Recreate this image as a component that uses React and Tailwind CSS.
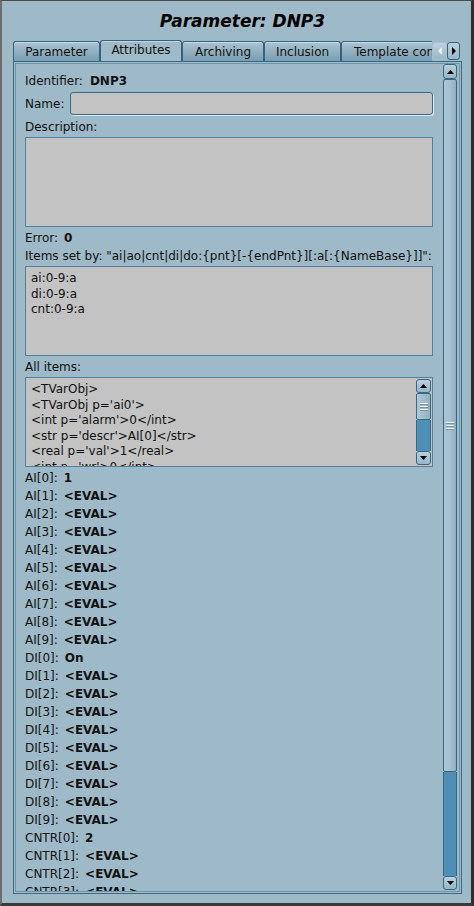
import React from 'react';

const Tri = ({ dir = 'up', color = '#000', w = 7, h = 4 }) => (
  <svg width={w} height={h} viewBox={`0 0 ${w} ${h}`} className="block">
    {dir === 'up' && <polygon points={`${w / 2},0 ${w},${h} 0,${h}`} fill={color} />}
    {dir === 'down' && <polygon points={`0,0 ${w},0 ${w / 2},${h}`} fill={color} />}
    {dir === 'left' && <polygon points={`0,${h / 2} ${w},0 ${w},${h}`} fill={color} />}
    {dir === 'right' && <polygon points={`0,0 ${w},${h / 2} 0,${h}`} fill={color} />}
  </svg>
);

const Grip = () => (
  <div className="flex flex-col gap-[2px] items-center">
    <div className="w-[8px] h-[1px] bg-white shadow-[0_1px_0_#6f93a7]" />
    <div className="w-[8px] h-[1px] bg-white shadow-[0_1px_0_#6f93a7]" />
    <div className="w-[8px] h-[1px] bg-white shadow-[0_1px_0_#6f93a7]" />
  </div>
);

const Tab = ({ w, selected, children }) => (
  <div
    className={
      selected
        ? `${w} h-[22px] -mb-[1px] relative z-10 flex items-start justify-center pt-[2px] border border-b-0 border-[#35627d] rounded-t-[3px] bg-[#9fbac8] shadow-[inset_0_1px_0_#c4d7e1] shrink-0`
        : `${w} h-[20px] flex items-center justify-center pt-[1px] border border-b-0 border-[#35627d] rounded-t-[3px] bg-linear-to-b from-[#aac4d2] to-[#7a9db1] shadow-[inset_0_1px_0_#c9dbe4] shrink-0`
    }
  >
    <span className="whitespace-nowrap leading-[14px]">{children}</span>
  </div>
);

const TextBox = ({ lines = [], children }) => (
  <div className="h-[90px] border border-[#56809a] bg-[#c3c3c3] relative overflow-hidden">
    <div className="pl-[5px] pt-[4px] leading-[15.5px] whitespace-nowrap">
      {lines.map((l, i) => (
        <div key={i}>{l}</div>
      ))}
    </div>
    {children}
  </div>
);

const Field = ({ label, value }) => (
  <div className="h-[18px] flex items-center gap-[6px] whitespace-nowrap leading-[14px]">
    <span>{label}</span>
    <span className="font-bold">{value}</span>
  </div>
);

export default function App() {
  const values = [];
  for (let i = 0; i < 10; i++) values.push(['AI[' + i + ']:', i === 0 ? '1' : '<EVAL>']);
  for (let i = 0; i < 10; i++) values.push(['DI[' + i + ']:', i === 0 ? 'On' : '<EVAL>']);
  for (let i = 0; i < 10; i++) values.push(['CNTR[' + i + ']:', i === 0 ? '2' : '<EVAL>']);

  const allItems = [
    '<TVarObj>',
    "<TVarObj p='ai0'>",
    "<int p='alarm'>0</int>",
    "<str p='descr'>AI[0]</str>",
    "<real p='val'>1</real>",
    "<int p='wr'>0</int>",
  ];

  return (
    <div className="w-[474px] h-[906px] bg-[#9eb9c7] border-l-2 border-l-[#6d6d6d] border-t border-t-[#4a4a4a] border-r-[3px] border-r-[#352d2d] border-b-[3px] border-b-[#3a3a3a] flex flex-col overflow-hidden font-['DejaVu_Sans',sans-serif] text-[12px] text-[#111]">
      {/* title */}
      <div className="h-[39px] shrink-0 pt-[9px] pl-[12px] text-center text-[17px] leading-[22px] font-bold italic text-black">
        Parameter: DNP3
      </div>

      {/* tab bar */}
      <div className="flex h-[21px] shrink-0 ml-[11px] w-[449px] relative z-10">
        <div className="flex items-end w-[419px] overflow-hidden">
          <Tab w="w-[87px]">Parameter</Tab>
          <Tab w="w-[82px]" selected>Attributes</Tab>
          <Tab w="w-[82px]">Archiving</Tab>
          <Tab w="w-[77px]">Inclusion</Tab>
          <div className="w-[160px] h-[20px] flex items-center pt-[1px] pl-[12px] border border-b-0 border-[#35627d] rounded-t-[3px] bg-linear-to-b from-[#aac4d2] to-[#7a9db1] shadow-[inset_0_1px_0_#c9dbe4] shrink-0">
            <span className="whitespace-nowrap leading-[14px]">Template configuration</span>
          </div>
        </div>
        <div className="flex items-start pt-[2px]">
          <div className="w-[15px] h-[18px] flex items-center justify-center rounded-[3px] bg-linear-to-b from-[#bcd1dc] to-[#9ab7c7] border border-[#a8c1ce]">
            <Tri dir="left" color="#e8eff3" w={4} h={8} />
          </div>
          <div className="w-[13px] h-[18px] flex items-center justify-center rounded-[3px] bg-linear-to-b from-[#bcd1dc] to-[#9ab7c7] border border-[#35627d]">
            <Tri dir="right" w={4} h={8} />
          </div>
        </div>
      </div>

      {/* pane */}
      <div className="ml-[11px] w-[449px] h-[833px] border border-[#3c6a84] p-[1px] shrink-0">
        <div className="h-full border border-[#6f97ab] flex">
          {/* content */}
          <div className="flex-1 overflow-hidden pl-[9px] pr-[10px] pt-[8px] flex flex-col *:shrink-0">
            <div className="h-[18px] flex items-center gap-[7px] whitespace-nowrap leading-[14px]">
              <span>Identifier:</span>
              <span className="font-bold">DNP3</span>
            </div>
            <div className="mt-[2px] h-[23px] flex items-center gap-[6px]">
              <span className="leading-[14px]">Name:</span>
              <div className="flex-1 h-[23px] rounded-[3px] border border-[#3b6a86] bg-[#c3c3c3] shadow-[1px_1px_0_#dfe9ee]" />
            </div>
            <div className="mt-[3px] h-[18px] flex items-center leading-[14px]">Description:</div>
            <div className="mt-[1px]">
              <TextBox />
            </div>
            <div className="mt-[2px]">
              <Field label="Error:" value="0" />
            </div>
            <div className="h-[18px] flex items-center leading-[14px] whitespace-nowrap">
              {'Items set by: "ai|ao|cnt|di|do:{pnt}[-{endPnt}][:a[:{NameBase}]]":'}
            </div>
            <div className="mt-[1px]">
              <TextBox lines={['ai:0-9:a', 'di:0-9:a', 'cnt:0-9:a']} />
            </div>
            <div className="mt-[2px] h-[18px] flex items-center leading-[14px]">All items:</div>
            <div className="mt-[1px]">
              <TextBox lines={allItems}>
                <div className="absolute right-[1px] top-[1px] bottom-[1px] w-[15px] flex flex-col">
                  <div className="h-[14px] shrink-0 flex items-center justify-center rounded-[3px] border border-[#3a6882] bg-linear-to-b from-[#bad0dc] to-[#97b5c6]">
                    <Tri dir="up" />
                  </div>
                  <div className="h-[27px] shrink-0 flex items-center justify-center rounded-[2px] border border-[#3a6882] bg-linear-to-r from-[#afc9d6] to-[#90b1c3]">
                    <Grip />
                  </div>
                  <div className="flex-1 bg-[#4f8fb5] border-x border-[#3a6882]" />
                  <div className="h-[14px] shrink-0 flex items-center justify-center rounded-[3px] border border-[#3a6882] bg-linear-to-b from-[#bad0dc] to-[#97b5c6]">
                    <Tri dir="down" />
                  </div>
                </div>
              </TextBox>
            </div>
            <div className="mt-[2px] flex flex-col *:shrink-0">
              {values.map(([l, v]) => (
                <Field key={l} label={l} value={v} />
              ))}
            </div>
          </div>

          {/* main scrollbar */}
          <div className="w-[14px] mr-[2px] pb-[1px] flex flex-col shrink-0">
            <div className="h-[15px] shrink-0 flex items-center justify-center rounded-[3px] border border-[#3a6882] bg-linear-to-b from-[#bad0dc] to-[#97b5c6]">
              <Tri dir="up" />
            </div>
            <div className="h-[693px] shrink-0 flex items-center justify-center border border-[#3a6882] rounded-[2px] bg-linear-to-r from-[#aac5d3] via-[#a6c1d0] to-[#8eafc1]">
              <Grip />
            </div>
            <div className="flex-1 bg-[#4f8fb5] border-x border-[#3a6882]" />
            <div className="h-[14px] shrink-0 flex items-center justify-center rounded-[3px] border border-[#3a6882] bg-linear-to-b from-[#bad0dc] to-[#97b5c6]">
              <Tri dir="down" />
            </div>
          </div>
        </div>
      </div>
    </div>
  );
}
